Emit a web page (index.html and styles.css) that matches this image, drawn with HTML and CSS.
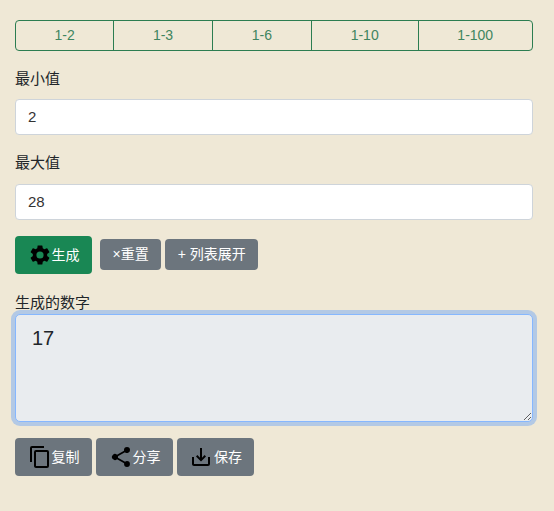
FILE: index.html
```html
<!DOCTYPE html>
<html lang="zh">
<head>
<meta charset="utf-8">
<title>随机数生成器</title>
<link rel="stylesheet" href="styles.css">
</head>
<body>
<main class="page">
  <div class="range-group">
    <button class="range-btn">1-2</button>
    <button class="range-btn">1-3</button>
    <button class="range-btn">1-6</button>
    <button class="range-btn">1-10</button>
    <button class="range-btn">1-100</button>
  </div>

  <label class="field-label" for="min">最小值</label>
  <input class="field-input" id="min" type="text" value="2">

  <label class="field-label" for="max">最大值</label>
  <input class="field-input" id="max" type="text" value="28">

  <div class="actions">
    <button class="btn btn-big btn-green">
      <svg class="icon" viewBox="0 0 24 24"><path d="M19.14 12.94c.04-.3.06-.61.06-.94 0-.32-.02-.64-.07-.94l2.03-1.58a.49.49 0 0 0 .12-.61l-1.92-3.32a.49.49 0 0 0-.59-.22l-2.39.96c-.5-.38-1.03-.7-1.62-.94l-.36-2.54a.48.48 0 0 0-.48-.41h-3.84c-.24 0-.43.17-.47.41l-.36 2.54c-.59.24-1.13.57-1.62.94l-2.39-.96c-.22-.08-.47 0-.59.22L2.74 8.87c-.12.21-.08.47.12.61l2.03 1.58c-.05.3-.09.63-.09.94s.02.64.07.94l-2.03 1.58a.49.49 0 0 0-.12.61l1.92 3.32c.12.22.37.29.59.22l2.39-.96c.5.38 1.03.7 1.62.94l.36 2.54c.05.24.24.41.48.41h3.84c.24 0 .44-.17.47-.41l.36-2.54c.59-.24 1.13-.56 1.62-.94l2.39.96c.22.08.47 0 .59-.22l1.92-3.32c.12-.22.07-.47-.12-.61l-2.01-1.58zM12 15.6A3.6 3.6 0 1 1 12 8.4a3.6 3.6 0 0 1 0 7.2z"/></svg>生成
    </button>
    <button class="btn btn-small btn-gray btn-reset">×重置</button>
    <button class="btn btn-small btn-gray">+ 列表展开</button>
  </div>

  <label class="result-label" for="result">生成的数字</label>
  <textarea class="result" id="result">17</textarea>

  <div class="tools">
    <button class="btn btn-big btn-gray">
      <svg class="icon" viewBox="0 0 24 24"><path d="M16 1H4a2 2 0 0 0-2 2v14h2V3h12V1zm3 4H8a2 2 0 0 0-2 2v14c0 1.1.9 2 2 2h11a2 2 0 0 0 2-2V7a2 2 0 0 0-2-2zm0 16H8V7h11v14z"/></svg>复制
    </button>
    <button class="btn btn-big btn-gray">
      <svg class="icon" viewBox="0 0 24 24"><path d="M18 16.08c-.76 0-1.44.3-1.96.77L8.91 12.7c.05-.23.09-.46.09-.7s-.04-.47-.09-.7l7.05-4.11A2.99 2.99 0 0 0 21 5a3 3 0 1 0-6 0c0 .24.04.47.09.7L8.04 9.81A3 3 0 1 0 8.04 14.19l7.12 4.16c-.05.21-.08.43-.08.65a2.92 2.92 0 1 0 2.92-2.92z"/></svg>分享
    </button>
    <button class="btn btn-big btn-gray">
      <svg class="icon icon-save" viewBox="0 0 24 24"><path d="M19 12v7H5v-7H3v7c0 1.1.9 2 2 2h14a2 2 0 0 0 2-2v-7h-2zm-6 .67l2.59-2.58L17 11.5l-5 5-5-5 1.41-1.41L11 12.67V3h2v9.67z"/></svg>保存
    </button>
  </div>
</main>
</body>
</html>
```

FILE: styles.css
```css
* { box-sizing: border-box; }

html, body { margin: 0; }

body {
  background: #efe8d6;
  color: #212529;
  font-family: "Liberation Sans", "Noto Sans CJK SC", sans-serif;
  font-size: 15px;
  line-height: 21px;
}

.page {
  height: 511px;
  padding: 20px 21px 0 15px;
  overflow: hidden;
}

.range-group {
  display: flex;
  height: 31px;
  border: 1px solid #2c7d51;
  border-radius: 4px;
}

.range-btn {
  flex: 1 1 auto;
  padding: 0;
  background: transparent;
  border: 0;
  border-right: 1px solid #2c7d51;
  color: #3f8560;
  font: inherit;
  font-size: 14px;
}

.range-btn:first-child { flex-grow: 0.99; }
.range-btn:last-child { border-right: 0; }

.field-label {
  display: block;
  margin-top: 17px;
}

.field-input {
  display: block;
  width: 100%;
  height: 36px;
  margin-top: 10px;
  padding: 0 12px 2px;
  background: #fff;
  border: 1px solid #ced4da;
  border-radius: 4px;
  color: #333;
  font: 15px/21px "Liberation Sans", sans-serif;
}

.field-input + .field-label { margin-top: 17px; }
.field-input + .field-label + .field-input { margin-top: 11px; }

.actions {
  display: flex;
  align-items: flex-start;
  gap: 4px;
  margin-top: 16px;
}

.tools {
  display: flex;
  gap: 4px;
  margin-top: 16px;
}

.btn {
  display: inline-flex;
  align-items: center;
  justify-content: center;
  padding: 0;
  border: 0;
  border-radius: 4px;
  color: #fff;
  font: inherit;
  font-size: 14px;
}

.btn-big { width: 77px; height: 38px; }
.btn-small { height: 31px; margin-top: 3px; padding: 0 12.5px; }
.btn-reset { margin-left: 4px; }
.btn-green { background: #198754; }
.btn-gray { background: #6c757d; }

.icon {
  display: block;
  width: 24px;
  height: 24px;
  flex: none;
  fill: #000;
}

.icon-save { margin-right: 1px; }

.result-label {
  display: block;
  margin-top: 18px;
  margin-bottom: 1px;
  line-height: 21px;
}

.result {
  display: block;
  width: 100%;
  height: 108px;
  padding: 8px 16px;
  background: #e9ecef;
  border: 1px solid #86b7fe;
  border-radius: 5px;
  box-shadow: 0 0 0 4px #b3c9e5;
  outline: 0;
  color: #212529;
  font: 20px/30px "Liberation Sans", sans-serif;
  resize: vertical;
}
```
